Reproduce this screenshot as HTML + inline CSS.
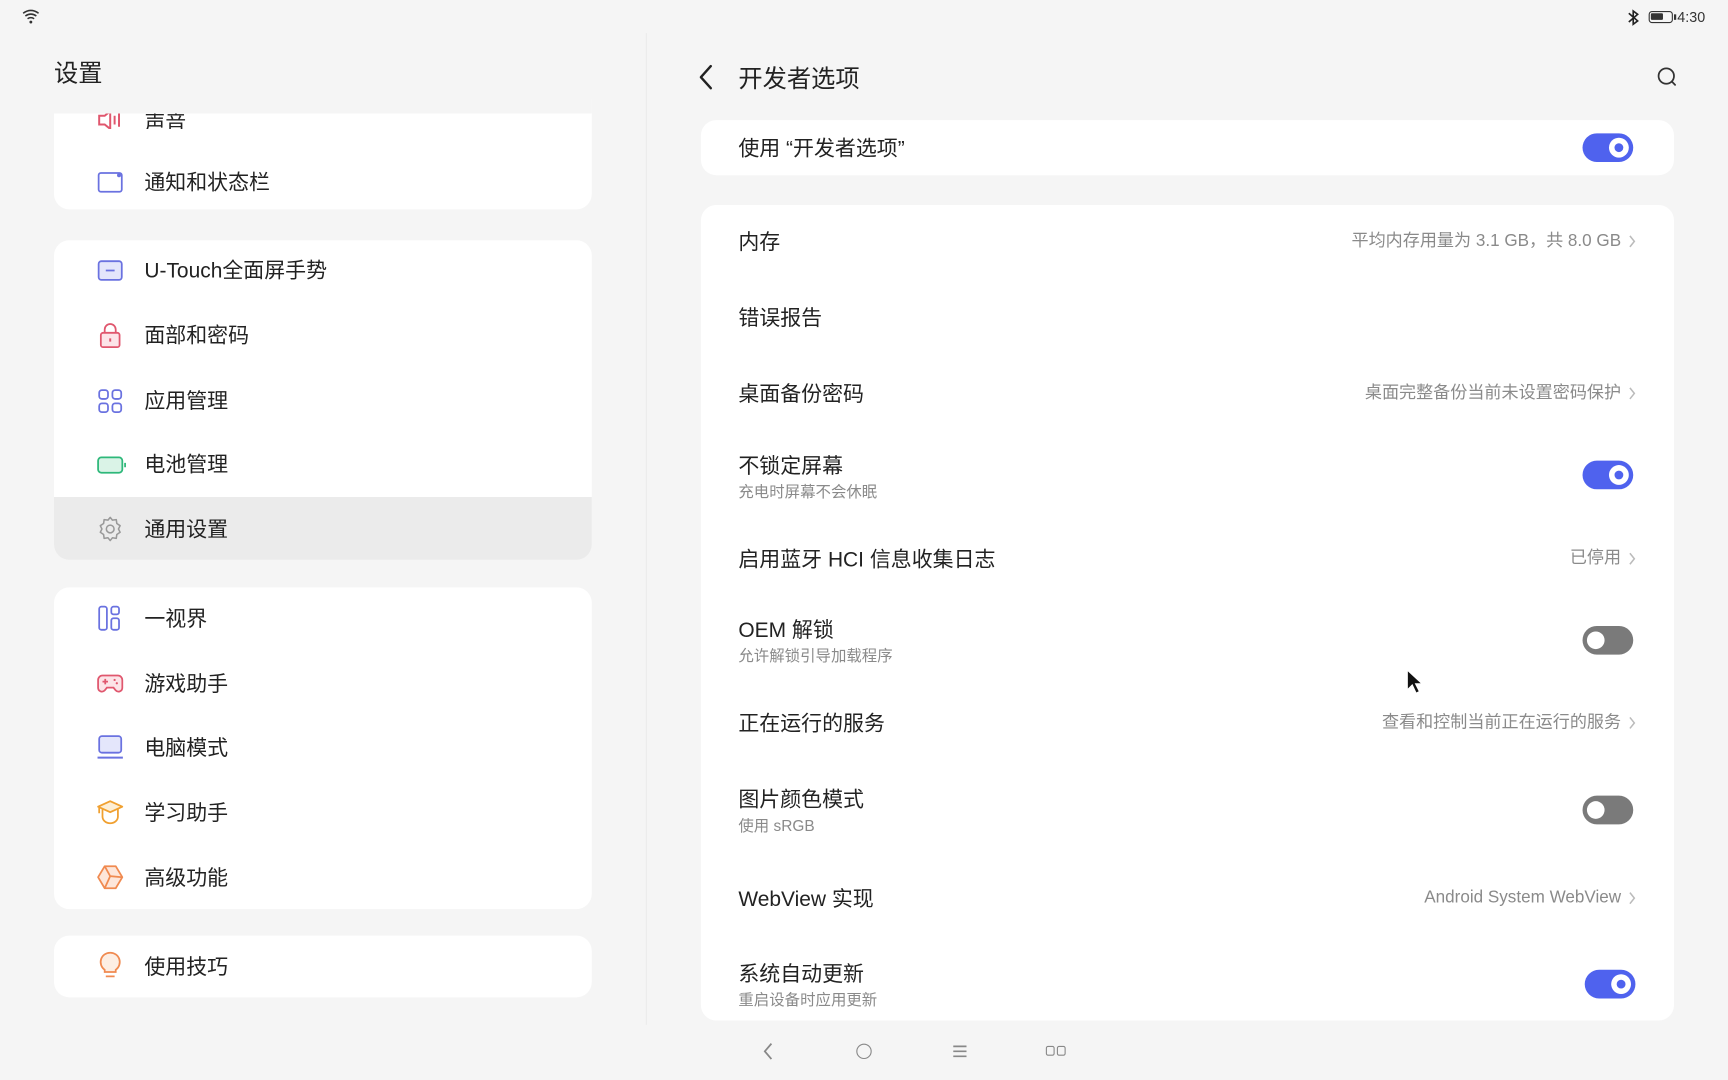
<!DOCTYPE html>
<html><head><meta charset="utf-8">
<style>
*{margin:0;padding:0;box-sizing:border-box}
html,body{width:1728px;height:1080px;overflow:hidden;background:#f5f5f5}
#w{position:absolute;left:0;top:0;width:1568px;height:980px;transform:scale(1.10204);transform-origin:0 0;background:#f5f5f5;font-family:"Liberation Sans","Noto Sans CJK SC",sans-serif;color:#222}
.a{position:absolute}
.card{position:absolute;background:#fff;border-radius:14px}
.it{position:absolute;left:131px;font-size:19px;color:#222;line-height:22px;margin-top:2px}
.ic{position:absolute;left:88px;width:24px;height:24px}
.t{position:absolute;left:670px;font-size:19px;color:#222;line-height:22px;margin-top:2px}
.s{position:absolute;left:670px;font-size:14px;color:#8a8a8a;line-height:16px;margin-top:1px}
.v{position:absolute;right:97px;font-size:15.5px;color:#8a8a8a;line-height:16px;white-space:nowrap}
.ch{position:absolute;left:1477px;width:8px;height:12px}
.tg{position:absolute;left:1436px;width:46px;height:26px;border-radius:13px;background:#4f62ee}
.tg::after{content:"";position:absolute;right:4px;top:4px;width:18px;height:18px;border-radius:50%;background:#fff}
.tg::before{content:"";position:absolute;right:9px;top:9px;width:8px;height:8px;border-radius:50%;background:#4f62ee;z-index:2}
.off{background:#7a7a7a}
.off::after{left:4px;right:auto;top:5px;width:16px;height:16px}
.off::before{display:none}
</style></head><body><div id="w">
<svg class="a" style="left:20px;top:8px" width="16" height="14" viewBox="0 0 16 14"><path d="M1 4 Q8 -1 15 4 M3 6.5 Q8 3 13 6.5 M5 9 Q8 7 11 9" stroke="#333" stroke-width="1.4" fill="none"/><circle cx="8" cy="12" r="1.3" fill="#333"/></svg>
<svg class="a" style="left:1476px;top:8px" width="12" height="16" viewBox="0 0 12 16"><path d="M2 4 L10 11 L6 14 L6 2 L10 5 L2 12" stroke="#222" stroke-width="1.5" fill="none"/></svg>
<div class="a" style="left:1496px;top:10px;width:22px;height:11px;border:1.5px solid #333;border-radius:3px"><div style="position:absolute;left:1px;top:1px;width:11px;height:6px;background:#333;border-radius:1px"></div></div>
<div class="a" style="left:1519px;top:13px;width:2px;height:5px;background:#333"></div>
<div class="a" style="left:1522px;top:8px;font-size:13px;color:#333">4:30</div>

<div class="a" style="left:49px;top:49px;font-size:22px;color:#222">设置</div>
<div class="a" style="left:586px;top:30px;width:1px;height:900px;background:#ececec"></div>
<div class="card" style="left:49px;top:90px;width:488px;height:100px;border-radius:0 0 14px 14px"></div>
<div class="a" style="left:49px;top:80px;width:488px;height:23px;background:#f5f5f5"></div>
<div class="a" style="left:88px;top:103px;width:460px;height:14px;overflow:hidden"><div style="position:absolute;top:-6px;left:43px;font-size:19px">声音</div><svg style="position:absolute;left:0;top:-6px" width="24" height="24" viewBox="0 0 24 24"><path d="M2 8 L2 16 L7 16 L12 20 L12 4 L7 8Z M16 8 L16 16 M20 6 L20 18" stroke="#e0576e" stroke-width="1.8" fill="none"/></svg></div>
<svg class="ic" style="top:154px" viewBox="0 0 24 24"><rect x="1.5" y="3" width="21" height="17" rx="2" stroke="#6a72e0" stroke-width="1.6" fill="none"/><circle cx="20" cy="5" r="1.8" fill="#6a72e0"/></svg>
<div class="it" style="top:154px">通知和状态栏</div>

<div class="card" style="left:49px;top:218px;width:488px;height:290px"></div>
<div class="a" style="left:49px;top:451px;width:488px;height:57px;background:#ebebeb;border-radius:0 0 14px 14px"></div>
<svg class="ic" style="top:234px" viewBox="0 0 24 24"><rect x="1.5" y="3" width="21" height="17" rx="2.5" stroke="#6a72e0" stroke-width="1.6" fill="#e4e6fb"/><path d="M8 11.5 H16" stroke="#6a72e0" stroke-width="1.6"/></svg>
<div class="it" style="top:234px">U-Touch全面屏手势</div>
<svg class="ic" style="top:292px" viewBox="0 0 24 24"><path d="M7 10 V7 a5 5 0 0 1 10 0 V10" stroke="#e0576e" stroke-width="1.6" fill="none"/><rect x="3.5" y="10" width="17" height="13" rx="2" stroke="#e0576e" stroke-width="1.6" fill="#fce4e8"/><path d="M12 15 V18" stroke="#e0576e" stroke-width="1.8"/></svg>
<div class="it" style="top:293px">面部和密码</div>
<svg class="ic" style="top:352px" viewBox="0 0 24 24"><g stroke="#6a72e0" stroke-width="1.6" fill="none"><rect x="2" y="2" width="8" height="8" rx="2.5"/><rect x="14" y="2" width="8" height="8" rx="2.5"/><rect x="2" y="14" width="8" height="8" rx="2.5"/><rect x="14" y="14" width="8" height="8" rx="2.5"/></g></svg>
<div class="it" style="top:352px">应用管理</div>
<svg class="ic" style="top:410px;width:28px" viewBox="0 0 28 24"><rect x="1" y="5" width="22" height="14" rx="3" stroke="#2eb87a" stroke-width="1.6" fill="#daf3e7"/><path d="M25.5 10 V14" stroke="#2eb87a" stroke-width="1.6"/></svg>
<div class="it" style="top:410px">电池管理</div>
<svg class="ic" style="top:468px" viewBox="0 0 24 24"><path d="M12 1.5 L14 4 L17.5 3.5 L18 7 L21 9 L19.5 12 L21 15 L18 17 L17.5 20.5 L14 20 L12 22.5 L10 20 L6.5 20.5 L6 17 L3 15 L4.5 12 L3 9 L6 7 L6.5 3.5 L10 4Z" stroke="#999" stroke-width="1.4" fill="none" stroke-linejoin="round"/><circle cx="12" cy="12" r="3.5" stroke="#999" stroke-width="1.4" fill="none"/></svg>
<div class="it" style="top:469px">通用设置</div>

<div class="card" style="left:49px;top:533px;width:488px;height:292px"></div>
<svg class="ic" style="top:549px" viewBox="0 0 24 24"><g stroke="#6a72e0" stroke-width="1.6" fill="none"><rect x="2" y="1.5" width="7" height="21" rx="2"/><rect x="13" y="1.5" width="7" height="7" rx="2"/><rect x="13" y="12" width="7" height="10.5" rx="2"/></g></svg>
<div class="it" style="top:550px">一视界</div>
<svg class="ic" style="top:608px" viewBox="0 0 24 24"><path d="M5 5 H19 a4 4 0 0 1 4 4 V16 a3.5 3.5 0 0 1 -6 2.5 L15 16 H9 L7 18.5 a3.5 3.5 0 0 1 -6 -2.5 V9 a4 4 0 0 1 4 -4Z" stroke="#e0576e" stroke-width="1.6" fill="#fce4e8"/><path d="M5 10.5 H10 M7.5 8 V13" stroke="#e0576e" stroke-width="1.6"/><circle cx="16" cy="9" r="1" fill="#e0576e"/><circle cx="18" cy="12" r="1" fill="#e0576e"/></svg>
<div class="it" style="top:609px">游戏助手</div>
<svg class="ic" style="top:666px" viewBox="0 0 24 24"><rect x="2" y="2" width="20" height="15" rx="2.5" stroke="#6a72e0" stroke-width="1.6" fill="#e4e6fb"/><path d="M0.5 21.5 H23.5" stroke="#6a72e0" stroke-width="1.8"/></svg>
<div class="it" style="top:667px">电脑模式</div>
<svg class="ic" style="top:725px" viewBox="0 0 24 24"><path d="M1 7 L12 2 L23 7 L12 12Z" stroke="#f0a030" stroke-width="1.6" fill="#fdeed5" stroke-linejoin="round"/><path d="M5 9 V16 a7 6 0 0 0 14 0 V9" stroke="#f0a030" stroke-width="1.6" fill="none"/><path d="M2 8 V13" stroke="#f0a030" stroke-width="1.6"/></svg>
<div class="it" style="top:726px">学习助手</div>
<svg class="ic" style="top:784px" viewBox="0 0 24 24"><path d="M7 2 H17 L23 12 L17 22 H7 L1 12Z" stroke="#f08a50" stroke-width="1.6" fill="#fde6da" stroke-linejoin="round"/><path d="M7 2 L12 11 L23 12 M12 11 L7 22" stroke="#f08a50" stroke-width="1.6" fill="none"/></svg>
<div class="it" style="top:785px">高级功能</div>

<div class="card" style="left:49px;top:849px;width:488px;height:56px"></div>
<svg class="ic" style="top:863px;height:26px" viewBox="0 0 24 26"><path d="M12 1.5 a8.5 8.5 0 0 0 -5 15.5 V19 H17 V17 a8.5 8.5 0 0 0 -5 -15.5Z" stroke="#f08a50" stroke-width="1.6" fill="#fdeee3"/><path d="M8 23 H16" stroke="#f08a50" stroke-width="1.6"/></svg>
<div class="it" style="top:866px">使用技巧</div>

<svg class="a" style="left:633px;top:58px" width="16" height="24" viewBox="0 0 16 24"><path d="M12 2 L3 12 L12 22" stroke="#222" stroke-width="2.2" fill="none" stroke-linecap="round" stroke-linejoin="round"/></svg>
<div class="a" style="left:670px;top:54px;font-size:22px;color:#222">开发者选项</div>
<svg class="a" style="left:1503px;top:60px" width="20" height="20" viewBox="0 0 20 20"><circle cx="9" cy="9" r="7" stroke="#333" stroke-width="1.6" fill="none"/><path d="M14 14 L17 17" stroke="#333" stroke-width="1.6" stroke-linecap="round"/></svg>

<div class="card" style="left:636px;top:109px;width:883px;height:50px"></div>
<div class="t" style="top:123px">使用 “开发者选项”</div>
<div class="tg" style="top:121px"></div>

<div class="card" style="left:636px;top:186px;width:883px;height:740px"></div>
<div class="t" style="top:208px">内存</div>
<div class="v" style="top:211px">平均内存用量为 3.1 GB，共 8.0 GB</div>
<div class="t" style="top:277px">错误报告</div>
<div class="t" style="top:346px">桌面备份密码</div>
<div class="v" style="top:349px">桌面完整备份当前未设置密码保护</div>
<div class="t" style="top:411px">不锁定屏幕</div>
<div class="s" style="top:437px">充电时屏幕不会休眠</div>
<div class="tg" style="top:418px"></div>
<div class="t" style="top:496px">启用蓝牙 HCI 信息收集日志</div>
<div class="v" style="top:499px">已停用</div>
<div class="t" style="top:560px">OEM 解锁</div>
<div class="s" style="top:586px">允许解锁引导加载程序</div>
<div class="tg off" style="top:568px"></div>
<div class="t" style="top:645px">正在运行的服务</div>
<div class="v" style="top:648px">查看和控制当前正在运行的服务</div>
<div class="t" style="top:714px">图片颜色模式</div>
<div class="s" style="top:740px">使用 sRGB</div>
<div class="tg off" style="top:722px"></div>
<div class="t" style="top:804px">WebView 实现</div>
<div class="v" style="top:807px">Android System WebView</div>
<div class="t" style="top:872px">系统自动更新</div>
<div class="s" style="top:898px">重启设备时应用更新</div>
<div class="tg" style="top:880px;left:1438px"></div>

<svg class="ch" style="top:213px" viewBox="0 0 8 12"><path d="M2 1 L6 6 L2 11" stroke="#bbb" stroke-width="1.4" fill="none"/></svg>
<svg class="ch" style="top:351px" viewBox="0 0 8 12"><path d="M2 1 L6 6 L2 11" stroke="#bbb" stroke-width="1.4" fill="none"/></svg>
<svg class="ch" style="top:501px" viewBox="0 0 8 12"><path d="M2 1 L6 6 L2 11" stroke="#bbb" stroke-width="1.4" fill="none"/></svg>
<svg class="ch" style="top:650px" viewBox="0 0 8 12"><path d="M2 1 L6 6 L2 11" stroke="#bbb" stroke-width="1.4" fill="none"/></svg>
<svg class="ch" style="top:809px" viewBox="0 0 8 12"><path d="M2 1 L6 6 L2 11" stroke="#bbb" stroke-width="1.4" fill="none"/></svg>

<svg class="a" style="left:1276px;top:607px" width="18" height="24" viewBox="0 0 18 24"><path d="M1 1 L1 19 L5.5 14.5 L9 22 L12 20.5 L8.5 13.5 L14.5 13.5Z" fill="#111" stroke="#fff" stroke-width="1"/></svg>

<svg class="a" style="left:690px;top:945px" width="14" height="18" viewBox="0 0 14 18"><path d="M10 2 L4 9 L10 16" stroke="#888" stroke-width="1.6" fill="none"/></svg>
<div class="a" style="left:777px;top:947px;width:14px;height:14px;border:1.6px solid #888;border-radius:50%"></div>
<svg class="a" style="left:864px;top:947px" width="14" height="14" viewBox="0 0 14 14"><path d="M1 2.5 H13 M1 7 H13 M1 11.5 H13" stroke="#888" stroke-width="1.5"/></svg>
<div class="a" style="left:949px;top:949px;width:8px;height:9px;border:1.5px solid #888;border-radius:2px"></div>
<div class="a" style="left:959px;top:949px;width:8px;height:9px;border:1.5px solid #888;border-radius:2px"></div>
</div></body></html>
